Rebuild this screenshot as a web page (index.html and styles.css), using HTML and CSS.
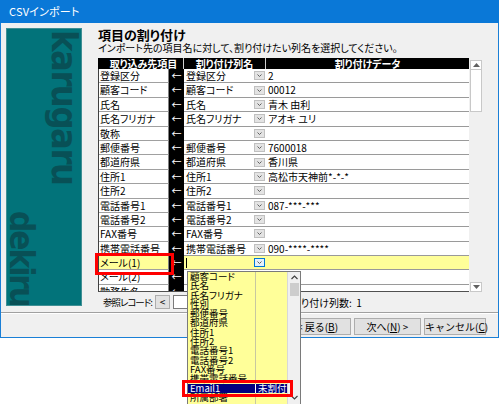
FILE: index.html
```html
<!DOCTYPE html>
<html>
<head>
  <meta charset="UTF-8">
  <title>CSVインポート</title>
  <link rel="stylesheet" href="styles.css">
</head>
<body>
  <div class="window">
    <div class="titlebar">CSVインポート</div>
    <div class="client">
      <div class="main">
        <div class="side">
          <span class="brand brand-top">karugaru</span>
          <span class="brand brand-bottom">dekiru</span>
        </div>
        <div class="content">
          <h1>項目の割り付け</h1>
          <p class="lead">インポート先の項目名に対して、割り付けたい列名を選択してください。</p>

          <div class="grid-wrap">
            <div class="grid">
              <div class="grid-head">
                <div class="head-cell head-target">取り込み先項目</div>
                <div class="head-cell head-column">割り付け列名</div>
                <div class="head-cell head-data">割り付けデータ</div>
              </div>
              <div class="grid-body">
                <div class="row"><div class="c-target">登録区分</div><div class="c-arrow">←</div><div class="c-column"><span>登録区分</span><i class="dd"></i></div><div class="c-data">2</div></div>
                <div class="row"><div class="c-target">顧客コード</div><div class="c-arrow">←</div><div class="c-column"><span>顧客コード</span><i class="dd"></i></div><div class="c-data">00012</div></div>
                <div class="row"><div class="c-target">氏名</div><div class="c-arrow">←</div><div class="c-column"><span>氏名</span><i class="dd"></i></div><div class="c-data">青木 由利</div></div>
                <div class="row"><div class="c-target">氏名フリガナ</div><div class="c-arrow">←</div><div class="c-column"><span>氏名フリガナ</span><i class="dd"></i></div><div class="c-data">アオキ ユリ</div></div>
                <div class="row"><div class="c-target">敬称</div><div class="c-arrow">←</div><div class="c-column"><span></span><i class="dd"></i></div><div class="c-data"></div></div>
                <div class="row"><div class="c-target">郵便番号</div><div class="c-arrow">←</div><div class="c-column"><span>郵便番号</span><i class="dd"></i></div><div class="c-data">7600018</div></div>
                <div class="row"><div class="c-target">都道府県</div><div class="c-arrow">←</div><div class="c-column"><span>都道府県</span><i class="dd"></i></div><div class="c-data">香川県</div></div>
                <div class="row"><div class="c-target">住所1</div><div class="c-arrow">←</div><div class="c-column"><span>住所1</span><i class="dd"></i></div><div class="c-data">高松市天神前*-*-*</div></div>
                <div class="row"><div class="c-target">住所2</div><div class="c-arrow">←</div><div class="c-column"><span>住所2</span><i class="dd"></i></div><div class="c-data"></div></div>
                <div class="row"><div class="c-target">電話番号1</div><div class="c-arrow">←</div><div class="c-column"><span>電話番号1</span><i class="dd"></i></div><div class="c-data">087-***-***</div></div>
                <div class="row"><div class="c-target">電話番号2</div><div class="c-arrow">←</div><div class="c-column"><span>電話番号2</span><i class="dd"></i></div><div class="c-data"></div></div>
                <div class="row"><div class="c-target">FAX番号</div><div class="c-arrow">←</div><div class="c-column"><span>FAX番号</span><i class="dd"></i></div><div class="c-data"></div></div>
                <div class="row"><div class="c-target">携帯電話番号</div><div class="c-arrow">←</div><div class="c-column"><span>携帯電話番号</span><i class="dd"></i></div><div class="c-data">090-****-****</div></div>
                <div class="row row-active"><div class="c-target">メール(1)</div><div class="c-arrow">←</div><div class="c-column"><span class="caret"></span><i class="dd dd-focus"></i></div><div class="c-data"></div></div>
                <div class="row"><div class="c-target">メール(2)</div><div class="c-arrow">←</div><div class="c-column"><span></span><i class="dd"></i></div><div class="c-data"></div></div>
                <div class="row"><div class="c-target">勤務先名</div><div class="c-arrow">←</div><div class="c-column"><span></span><i class="dd"></i></div><div class="c-data"></div></div>
              </div>
            </div>
            <div class="vscroll">
              <div class="sb-btn">
                <svg width="7" height="4" viewBox="0 0 7 4"><path d="M0 4 L3.5 0 L7 4 Z" fill="#606060"/></svg>
              </div>
              <div class="sb-thumb"></div>
              <div class="sb-track"></div>
              <div class="sb-btn">
                <svg width="7" height="4" viewBox="0 0 7 4"><path d="M0 0 L3.5 4 L7 0 Z" fill="#606060"/></svg>
              </div>
            </div>
          </div>

          <div class="record-bar">
            <span class="record-label">参照レコード:</span>
            <button class="mini-btn">&lt;</button>
            <span class="record-box"></span>
            <span class="record-count">割り付け列数:&nbsp; 1</span>
          </div>
        </div>
      </div>
      <div class="footer">
        <button class="btn btn-back">&lt; 戻る(<u>B</u>)</button>
        <button class="btn btn-next">次へ(<u>N</u>) &gt;</button>
        <button class="btn btn-cancel">キャンセル(<u>C</u>)</button>
      </div>
    </div>

    <!-- 開いているドロップダウン -->
    <div class="dropdown">
      <div class="dd-list">
        <div class="dd-item"><span>顧客コード</span><span></span></div>
        <div class="dd-item"><span>氏名</span><span></span></div>
        <div class="dd-item"><span>氏名フリガナ</span><span></span></div>
        <div class="dd-item"><span>性別</span><span></span></div>
        <div class="dd-item"><span>郵便番号</span><span></span></div>
        <div class="dd-item"><span>都道府県</span><span></span></div>
        <div class="dd-item"><span>住所1</span><span></span></div>
        <div class="dd-item"><span>住所2</span><span></span></div>
        <div class="dd-item"><span>電話番号1</span><span></span></div>
        <div class="dd-item"><span>電話番号2</span><span></span></div>
        <div class="dd-item"><span>FAX番号</span><span></span></div>
        <div class="dd-item"><span>携帯電話番号</span><span></span></div>
        <div class="dd-item selected"><span>Email1</span><span>未割付</span></div>
        <div class="dd-item"><span>所属部署</span><span></span></div>
      </div>
      <div class="dd-scroll">
        <svg width="7" height="5" viewBox="0 0 7 5"><path d="M0.5 4 L3.5 1 L6.5 4" fill="none" stroke="#404040" stroke-width="1.2"/></svg>
        <div class="dd-thumb"></div>
        <svg class="dd-down" width="7" height="5" viewBox="0 0 7 5"><path d="M0.5 1 L3.5 4 L6.5 1" fill="none" stroke="#404040" stroke-width="1.2"/></svg>
      </div>
    </div>

    <div class="mark mark-field"></div>
    <div class="mark mark-item"></div>
  </div>
</body>
</html>
```

FILE: styles.css
```css
html {
  overflow: hidden;
}
body {
  margin: 0;
  height: 404px;
  background-color: #fff;
  font-family: "Noto Sans CJK JP", sans-serif;
  font-feature-settings: "palt";
  color: #000;
}
.window {
  position: relative;
  width: 499px;
  height: 338px;
  box-sizing: border-box;
  border: 1px solid #1a7fd6;
  border-top: none;
  display: flex;
  flex-direction: column;
}
.titlebar {
  height: 23px;
  line-height: 23px;
  margin: 0 -1px;
  padding-left: 9px;
  background-color: #0a78d7;
  color: #fff;
  font-size: 11px;
  letter-spacing: 0.2px;
}
.client {
  flex: 1;
  display: flex;
  flex-direction: column;
  background-color: #f0f0f0;
}
.main {
  height: 289px;
  display: flex;
  padding: 5px 0 0 5px;
  box-sizing: border-box;
}
.side {
  width: 76px;
  height: 278px;
  box-sizing: border-box;
  background-color: #02737a;
  border: 1px solid #3f8f94;
  display: flex;
  flex-direction: column;
  justify-content: space-between;
  overflow: hidden;
}
.brand {
  writing-mode: vertical-rl;
  font-family: "DejaVu Sans Condensed", "DejaVu Sans", sans-serif;
  font-weight: bold;
  font-size: 36px;
  line-height: 30px;
  color: #085056;
  letter-spacing: -1.5px;
}
.brand-top {
  align-self: flex-end;
  margin: 1px 2px 0 0;
}
.brand-bottom {
  align-self: flex-start;
  font-size: 33px;
  letter-spacing: -2px;
  margin: 0 0 -1px -1px;
}
.content {
  margin-left: 16px;
  display: flex;
  flex-direction: column;
}
h1 {
  margin: 0;
  font-size: 13px;
  line-height: 14px;
  font-weight: bold;
}
.lead {
  margin: 0 0 4px;
  font-size: 10px;
  line-height: 12px;
}
.grid-wrap {
  display: flex;
  gap: 1px;
}
.grid {
  width: 371px;
}
.grid-head {
  display: flex;
  height: 11px;
  background-color: #000;
  color: #fff;
  font-size: 10px;
  font-weight: bold;
  line-height: 11px;
}
.head-cell {
  text-align: center;
  border-right: 1px solid #d0d0d0;
  box-sizing: border-box;
}
.head-target { width: 86px; padding-left: 6px; }
.head-column { width: 82px; }
.head-data { flex: 1; border-right: none; }
.grid-body {
  height: 223px;
  overflow: hidden;
  border-left: 1px solid #404040;
  border-bottom: 1px solid #505050;
  box-sizing: border-box;
  background-color: #fff;
}
.row {
  display: flex;
  height: 14.4px;
  font-size: 10px;
  line-height: 13px;
}
.c-target {
  width: 70px;
  padding-left: 1px;
  box-sizing: border-box;
  border-right: 1px solid #808080;
  border-bottom: 1px solid #a0a0a0;
  white-space: nowrap;
  overflow: hidden;
}
.c-arrow {
  width: 15px;
  background-color: #000;
  color: #fff;
  text-align: center;
}
.c-column {
  width: 82px;
  display: flex;
  justify-content: space-between;
  align-items: center;
  padding: 0 1px 0 2px;
  box-sizing: border-box;
  border-bottom: 1px solid #9a9a9a;
  white-space: nowrap;
}
.c-column span {
  align-self: flex-start;
}
.c-data {
  flex: 1;
  padding-left: 2px;
  border-bottom: 1px solid #9a9a9a;
  white-space: nowrap;
}
.dd {
  width: 11px;
  height: 9px;
  box-sizing: border-box;
  border: 1px solid #c0c0c0;
  background: #e3e3e3 url("data:image/svg+xml,%3Csvg xmlns='http://www.w3.org/2000/svg' width='9' height='7'%3E%3Cpath d='M2.5 2.5 L4.5 4.5 L6.5 2.5' fill='none' stroke='%23606060' stroke-width='1'/%3E%3C/svg%3E") no-repeat center;
}
.dd-focus {
  border-color: #0078d7;
  background-color: #e5f1fb;
}
.row-active .c-target,
.row-active .c-column,
.row-active .c-data {
  background-color: #ffff99;
}
.caret {
  display: block;
  width: 1px;
  height: 10px;
  margin-top: 2px;
  background-color: #000;
}
.vscroll {
  width: 12px;
  height: 232px;
  margin-top: 2px;
  display: flex;
  flex-direction: column;
  background-color: #f0f0f0;
}
.sb-btn {
  height: 10px;
  border: 1px solid #c8c8c8;
  background-color: #fff;
  box-sizing: border-box;
  display: flex;
  align-items: center;
  justify-content: center;
}
.sb-thumb {
  height: 42px;
  border: 1px solid #c8c8c8;
  border-top: none;
  background-color: #fff;
  box-sizing: border-box;
}
.sb-track {
  flex: 1;
}
.record-bar {
  height: 20px;
  display: flex;
  align-items: center;
  font-size: 10px;
  padding-left: 5px;
  white-space: nowrap;
}
.record-label {
  font-size: 9.5px;
  letter-spacing: -1px;
  margin-right: 3px;
}
.mini-btn {
  width: 15px;
  height: 14px;
  padding: 0;
  border: 1px solid #adadad;
  background-color: #e1e1e1;
  font-family: inherit;
  font-size: 10px;
  line-height: 12px;
}
.record-box {
  width: 70px;
  height: 14px;
  margin-left: 3px;
  box-sizing: border-box;
  border: 1px solid #7a7a7a;
  background-color: #fff;
}
.record-count {
  margin-left: 48px;
}
.footer {
  flex: 1;
  border-top: 1px solid #a0a0a0;
  box-shadow: inset 0 1px #fff;
  display: flex;
  justify-content: flex-end;
  align-items: flex-start;
  gap: 3px;
  padding: 5px 12px 0 0;
}
.btn {
  height: 17px;
  padding: 0;
  border: 1px solid #adadad;
  background-color: #e1e1e1;
  font-family: inherit;
  font-size: 10px;
  line-height: 14px;
  color: #000;
  white-space: nowrap;
}
.btn-back { width: 67px; }
.btn-next { width: 67px; }
.btn-cancel { width: 62px; }
.dropdown {
  position: absolute;
  left: 186px;
  top: 271px;
  width: 114px;
  height: 133px;
  box-sizing: border-box;
  border: 1px solid #7a7a7a;
  border-bottom: none;
  display: flex;
  overflow: hidden;
}
.dd-list {
  flex: 1;
  background-color: #ffff99;
  background-image: linear-gradient(#c8c8a0, #c8c8a0);
  background-size: 1px 100%;
  background-position: 67px 0;
  background-repeat: no-repeat;
  font-size: 9.5px;
}
.dd-item {
  display: flex;
  height: 9.3px;
  line-height: 9.3px;
  white-space: nowrap;
}
.dd-item span:first-child {
  width: 68px;
  padding-left: 2px;
  box-sizing: border-box;
}
.dd-item span:last-child {
  flex: 1;
  padding-left: 2px;
}
.dd-item.selected {
  background-color: #000080;
  color: #fff;
  margin-left: -2px;
  padding-left: 2px;
}
.dd-item.selected span:first-child {
  border-right: 1px solid #fff;
}
.dd-scroll {
  width: 13px;
  background-color: #f0f0f0;
  border-left: 1px solid #d8d8d8;
  display: flex;
  flex-direction: column;
  align-items: center;
  padding-top: 3px;
  box-sizing: border-box;
}
.dd-thumb {
  width: 9px;
  height: 13px;
  margin-top: 3px;
  background-color: #cdcdcd;
}
.dd-down {
  margin-top: auto;
  margin-bottom: 4px;
}
.mark {
  position: absolute;
  box-sizing: border-box;
  border: 3px solid #ff0000;
}
.mark-field {
  left: 94px;
  top: 253px;
  width: 79px;
  height: 22px;
}
.mark-item {
  left: 181px;
  top: 380px;
  width: 111px;
  height: 17px;
}
```
